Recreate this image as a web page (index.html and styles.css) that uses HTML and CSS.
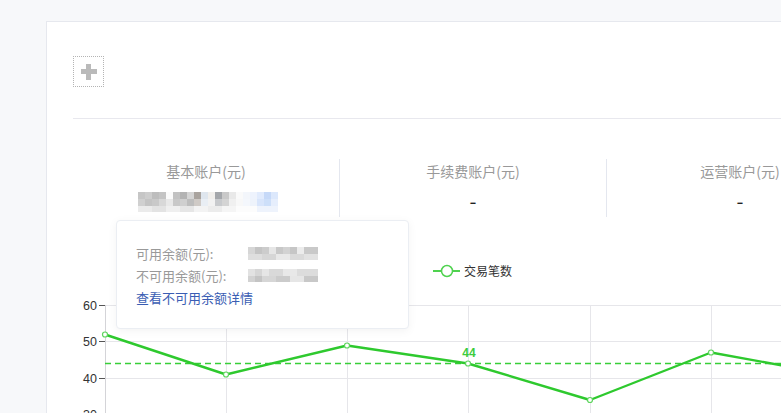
FILE: index.html
```html
<!DOCTYPE html>
<html lang="zh-CN">
<head>
    <meta charset="UTF-8">
    <meta name="viewport" content="width=device-width, initial-scale=1.0">
    <title>账户概览</title>
    <link rel="stylesheet" href="styles.css">
</head>
<body>
    <div class="page">
        <div class="card">
            <div class="toolbar">
                <button class="add-btn" title="添加">
                    <span class="plus"></span>
                </button>
            </div>

            <div class="stats">
                <div class="stat">
                    <div class="stat-title">基本账户(元)</div>
                    <div class="stat-value"><span class="mosaic mosaic-main"></span></div>
                </div>
                <div class="stat">
                    <div class="stat-title">手续费账户(元)</div>
                    <div class="stat-value">-</div>
                </div>
                <div class="stat">
                    <div class="stat-title">运营账户(元)</div>
                    <div class="stat-value">-</div>
                </div>
            </div>

            <svg class="chart" width="827" height="200" viewBox="0 0 827 200">
                <!-- legend -->
                <line x1="360" y1="41" x2="387" y2="41" stroke="#4fd24f" stroke-width="2"/>
                <circle cx="374" cy="41" r="5.5" fill="#fff" stroke="#4fd24f" stroke-width="1.5"/>
                <text x="391" y="45.5" class="legend-text">交易笔数</text>

                <!-- grid -->
                <g stroke="#e6e6ea" stroke-width="1">
                    <line x1="32" y1="75.5" x2="827" y2="75.5"/>
                    <line x1="32" y1="111.5" x2="827" y2="111.5"/>
                    <line x1="32" y1="148.5" x2="827" y2="148.5"/>
                    <line x1="32" y1="184.5" x2="827" y2="184.5"/>
                    <line x1="153.5" y1="75" x2="153.5" y2="200"/>
                    <line x1="274.5" y1="75" x2="274.5" y2="200"/>
                    <line x1="395.5" y1="75" x2="395.5" y2="200"/>
                    <line x1="517.5" y1="75" x2="517.5" y2="200"/>
                    <line x1="638.5" y1="75" x2="638.5" y2="200"/>
                    <line x1="759.5" y1="75" x2="759.5" y2="200"/>
                </g>

                <!-- y axis -->
                <line x1="32.5" y1="75" x2="32.5" y2="200" stroke="#d4d4d8"/>
                <g stroke="#555" stroke-width="1">
                    <line x1="26" y1="75.5" x2="32" y2="75.5"/>
                    <line x1="26" y1="111.5" x2="32" y2="111.5"/>
                    <line x1="26" y1="148.5" x2="32" y2="148.5"/>
                    <line x1="26" y1="184.5" x2="32" y2="184.5"/>
                </g>
                <g class="axis-text" text-anchor="end">
                    <text x="24" y="80">60</text>
                    <text x="24" y="116">50</text>
                    <text x="24" y="153">40</text>
                    <text x="24" y="189">30</text>
                </g>

                <!-- average line -->
                <line x1="32" y1="133.5" x2="827" y2="133.5" stroke="#38cf38" stroke-width="1.4" stroke-dasharray="6 4"/>
                <text x="396" y="127" class="mark-text" text-anchor="middle">44</text>

                <!-- series -->
                <polyline fill="none" stroke="#2ec92e" stroke-width="2.4" stroke-linejoin="round"
                    points="32,104.5 153,144.5 274,115.5 395,133.5 517,170 638,122.5 759,144.5"/>
                <g fill="#fff" stroke="#5dd55d" stroke-width="1.2">
                    <circle cx="32" cy="104.5" r="2.5"/>
                    <circle cx="153" cy="144.5" r="2.5"/>
                    <circle cx="274" cy="115.5" r="2.5"/>
                    <circle cx="395" cy="133.5" r="2.5"/>
                    <circle cx="517" cy="170" r="2.5"/>
                    <circle cx="638" cy="122.5" r="2.5"/>
                    <circle cx="759" cy="144.5" r="2.5"/>
                </g>
            </svg>

            <div class="popover">
                <div class="pop-row">
                    <span class="pop-label">可用余额(元):</span>
                    <span class="mosaic mosaic-small"></span>
                </div>
                <div class="pop-row">
                    <span class="pop-label">不可用余额(元):</span>
                    <span class="mosaic mosaic-small mosaic-alt"></span>
                </div>
                <a class="pop-link" href="#">查看不可用余额详情</a>
            </div>
        </div>
    </div>
</body>
</html>
```

FILE: styles.css
```css
body {
    margin: 0;
    background: #f7f8fa;
    font-family: "Noto Sans CJK SC", "Noto Sans", sans-serif;
    color: #333;
    overflow: hidden;
}

.page {
    padding: 21px 0 0 46px;
}

.card {
    position: relative;
    width: 900px;
    height: 500px;
    background: #fff;
    border: 1px solid #e6e8ee;
    padding: 34px 0 0 26px;
}

.toolbar {
    padding-bottom: 31px;
    border-bottom: 1px solid #e8e8ee;
}

.add-btn {
    display: flex;
    align-items: center;
    justify-content: center;
    width: 31px;
    height: 31px;
    padding: 0;
    background: #fff;
    border: 1px dotted #b4b4b4;
    cursor: pointer;
}

.plus {
    position: relative;
    display: block;
    width: 16px;
    height: 16px;
}

.plus::before,
.plus::after {
    content: "";
    position: absolute;
    background: #bababa;
}

.plus::before {
    left: 0;
    top: 5.5px;
    width: 16px;
    height: 5px;
}

.plus::after {
    left: 5.5px;
    top: 0;
    width: 5px;
    height: 16px;
}

.stats {
    display: flex;
    margin-top: 40px;
}

.stat {
    width: 266px;
    height: 58px;
    display: flex;
    flex-direction: column;
    align-items: center;
}

.stat + .stat {
    border-left: 1px solid #e4e7ef;
}

.stat-title {
    margin-top: 2px;
    font-size: 14px;
    line-height: 20px;
    color: #999;
}

.stat-value {
    margin-top: 6px;
    font-size: 20px;
    line-height: 28px;
    color: #222;
}

.mosaic {
    display: block;
}

.mosaic-main {
    width: 140px;
    height: 20px;
    margin-top: 5px;
    margin-left: 4px;
    background:
        linear-gradient(90deg, #c6c6c6 0 7px, #cdcdcd 7px 14px, #bdbdbd 14px 21px, #c4c4c4 21px 28px, #fbfbfb 28px 35px, #c2c2c2 35px 42px, #b3b3b3 42px 49px, #d4d4d4 49px 56px, #a9a39e 56px 63px, #dfe6ee 63px 70px, #f1efec 70px 77px, #a4a7ab 77px 84px, #c9c9c9 84px 91px, #e9e9e9 91px 98px, #fafafa 98px 105px, #f3f6fb 105px 112px, #eef3fd 112px 119px, #e1ebfd 119px 126px, #c6d9f8 126px 133px, #dce8fc 133px 140px) 0 0 / 140px 7px no-repeat,
        linear-gradient(90deg, #d0d0d0 0 7px, #c4c4c4 7px 14px, #c9c9c9 14px 21px, #d8d8d8 21px 28px, #e8e8e8 28px 35px, #c8c8c8 35px 42px, #cfcfcf 42px 49px, #bdbdbd 49px 56px, #cfcac6 56px 63px, #e9eef4 63px 70px, #f2f2f2 70px 77px, #c8cacd 77px 84px, #d4d4d4 84px 91px, #f0f0f0 91px 98px, #f8f8f8 98px 105px, #f4f7fc 105px 112px, #eef3fb 112px 119px, #d8e5fb 119px 126px, #cddff9 126px 133px, #e6eefc 133px 140px) 0 7px / 140px 7px no-repeat,
        linear-gradient(90deg, #ebebeb 0 14px, #e3e3e3 14px 28px, #efefef 28px 42px, #e6e6e6 42px 56px, #f3f3f3 56px 70px, #ececec 70px 84px, #f5f5f5 84px 98px, #fcfcfc 98px 119px, #eef3fc 119px 140px) 0 14px / 140px 6px no-repeat;
}

.chart {
    display: block;
    margin-top: 13px;
}

.legend-text {
    font-size: 12px;
    fill: #333;
}

.axis-text {
    font-family: "Liberation Sans", Arial, sans-serif;
    font-size: 12.5px;
    fill: #333;
}

.mark-text {
    font-family: "Liberation Sans", Arial, sans-serif;
    font-size: 12px;
    font-weight: bold;
    fill: #3ccc3c;
}

.popover {
    position: absolute;
    left: 69px;
    top: 198px;
    width: 252px;
    height: 86px;
    padding: 21px 20px 0 19px;
    background: #fff;
    border: 1px solid #ebeef3;
    border-radius: 4px;
    box-shadow: 0 2px 10px rgba(0, 0, 0, 0.05);
}

.pop-row {
    display: flex;
    align-items: center;
    height: 22px;
    font-size: 13px;
    color: #999;
}

.pop-label {
    width: 112px;
}

.mosaic-small {
    width: 70px;
    height: 13px;
    background:
        linear-gradient(90deg, #d6d6d6 0 7px, #c4c4c4 7px 14px, #cccccc 14px 21px, #e6e6e6 21px 28px, #c8c8c8 28px 35px, #d2d2d2 35px 42px, #c6c6c6 42px 49px, #ececec 49px 56px, #c9c9c9 56px 70px) 0 0 / 70px 7px no-repeat,
        linear-gradient(90deg, #dedede 0 14px, #d6d6d6 14px 28px, #e8e8e8 28px 42px, #dadada 42px 56px, #e2e2e2 56px 70px) 0 7px / 70px 6px no-repeat;
}

.mosaic-alt {
    background:
        linear-gradient(90deg, #e2e2e2 0 7px, #d6d6d6 7px 14px, #e6e6e6 14px 21px, #d9d9d9 21px 35px, #e8e8e8 35px 49px, #dcdcdc 49px 70px) 0 0 / 70px 7px no-repeat,
        linear-gradient(90deg, #d2d2d2 0 7px, #c4c4c4 7px 14px, #d6d6d6 14px 28px, #cbcbcb 28px 42px, #e6e6e6 42px 56px, #c8c8c8 56px 70px) 0 7px / 70px 6px no-repeat;
}

.pop-link {
    display: block;
    margin-top: 1px;
    font-size: 13px;
    line-height: 22px;
    color: #3a5db3;
    text-decoration: none;
}
```
